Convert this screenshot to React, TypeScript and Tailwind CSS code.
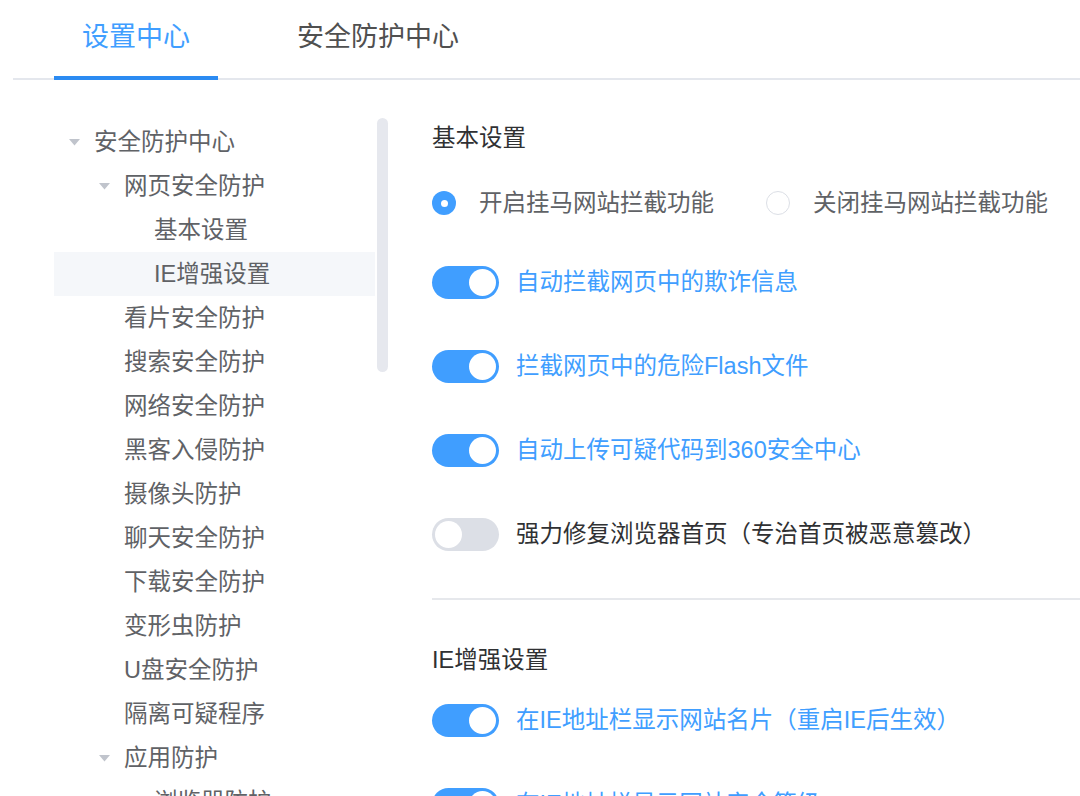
import { useState } from "react";

type TreeNode = {
  label: string;
  level: number;
  expanded?: boolean;
  active?: boolean;
};

const TREE: TreeNode[] = [
  { label: "安全防护中心", level: 0, expanded: true },
  { label: "网页安全防护", level: 1, expanded: true },
  { label: "基本设置", level: 2 },
  { label: "IE增强设置", level: 2, active: true },
  { label: "看片安全防护", level: 1 },
  { label: "搜索安全防护", level: 1 },
  { label: "网络安全防护", level: 1 },
  { label: "黑客入侵防护", level: 1 },
  { label: "摄像头防护", level: 1 },
  { label: "聊天安全防护", level: 1 },
  { label: "下载安全防护", level: 1 },
  { label: "变形虫防护", level: 1 },
  { label: "U盘安全防护", level: 1 },
  { label: "隔离可疑程序", level: 1 },
  { label: "应用防护", level: 1, expanded: true },
  { label: "浏览器防护", level: 2 },
];

const PAD: Record<number, string> = { 0: "pl-0", 1: "pl-[30px]", 2: "pl-[60px]" };

function Caret() {
  return (
    <svg width="11" height="7" viewBox="0 0 11 7">
      <path d="M0 0 H11 L5.5 6.5 Z" fill="#c0c4cc" />
    </svg>
  );
}

function Switch({ on, onToggle }: { on: boolean; onToggle: () => void }) {
  return (
    <button
      onClick={onToggle}
      className={`flex h-[33px] w-[67px] shrink-0 items-center rounded-full px-[3px] ${
        on ? "justify-end bg-[#409eff]" : "justify-start bg-[#dcdfe6]"
      }`}
    >
      <span className="h-[27px] w-[27px] rounded-full bg-white" />
    </button>
  );
}

function SwitchRow({ label, initial }: { label: string; initial: boolean }) {
  const [on, setOn] = useState(initial);
  return (
    <div className="flex h-[84px] items-center">
      <Switch on={on} onToggle={() => setOn(!on)} />
      <span className={`ml-[17px] whitespace-nowrap ${on ? "text-[#409eff]" : "text-[#303133]"}`}>{label}</span>
    </div>
  );
}

function Radio({ checked, label, onPick }: { checked: boolean; label: string; onPick: () => void }) {
  return (
    <label className="flex cursor-pointer items-center" onClick={onPick}>
      <span
        className={`flex h-[24px] w-[24px] items-center justify-center rounded-full ${
          checked ? "bg-[#409eff]" : "border-[1.5px] border-[#dcdfe6] bg-white"
        }`}
      >
        {checked && <span className="h-[7px] w-[7px] rounded-full bg-white" />}
      </span>
      <span className="ml-[23px] whitespace-nowrap text-[#606266]">{label}</span>
    </label>
  );
}

export default function App() {
  const [tab, setTab] = useState(0);
  const [blockOn, setBlockOn] = useState(true);

  return (
    <div className="h-[796px] w-[1080px] overflow-hidden bg-white font-['Liberation_Sans','Noto_Sans_CJK_SC',sans-serif] text-[23.5px] leading-[32px]">
      {/* Tabs */}
      <div className="ml-[13px] flex h-[80px] border-b-2 border-[#e4e7ed] pl-[41px]">
        {["设置中心", "安全防护中心"].map((t, i) => (
          <div
            key={t}
            onClick={() => setTab(i)}
            className={`relative cursor-pointer px-[28px] pt-[19px] text-[27px] leading-[36px] ${
              i === 1 ? "ml-[51px]" : ""
            } ${tab === i ? "text-[#409eff]" : "text-[#505050]"}`}
          >
            {t}
            {tab === i && <span className="absolute bottom-[-2px] left-0 right-0 h-[4px] bg-[#2b8bf2]" />}
          </div>
        ))}
      </div>

      <div className="flex">
        {/* Sidebar tree */}
        <div className="ml-[54px] flex items-start pt-[40px]">
          <div className="w-[321px]">
            {TREE.map((n) => (
              <div
                key={n.label}
                className={`flex h-[44px] items-center text-[#606266] ${PAD[n.level]} ${n.active ? "bg-[#f5f7fa]" : ""}`}
              >
                <span className="flex w-[40px] shrink-0 justify-center pl-[1px]">{n.expanded && <Caret />}</span>
                <span className="whitespace-nowrap">{n.label}</span>
              </div>
            ))}
          </div>
          <div className="ml-[2px] mt-[-2px] h-[254px] w-[11px] rounded-full bg-[#e6e8ee]" />
        </div>

        {/* Content */}
        <div className="ml-[44px] flex-1 pt-[42px]">
          <div className="text-[#303133]">基本设置</div>

          <div className="mt-[33px] flex h-[32px] items-center">
            <Radio checked={blockOn} label="开启挂马网站拦截功能" onPick={() => setBlockOn(true)} />
            <div className="ml-[52px]">
              <Radio checked={!blockOn} label="关闭挂马网站拦截功能" onPick={() => setBlockOn(false)} />
            </div>
          </div>

          <div className="mt-[21px]">
            <SwitchRow label="自动拦截网页中的欺诈信息" initial />
            <SwitchRow label="拦截网页中的危险Flash文件" initial />
            <SwitchRow label="自动上传可疑代码到360安全中心" initial />
            <SwitchRow label="强力修复浏览器首页（专治首页被恶意篡改）" initial={false} />
          </div>

          <div className="mt-[22px] h-[2px] bg-[#e6e8ec]" />

          <div className="mt-[44px] text-[#303133]">IE增强设置</div>
          <div className="mt-[2px]">
            <SwitchRow label="在IE地址栏显示网站名片（重启IE后生效）" initial />
            <SwitchRow label="在IE地址栏显示网站安全等级" initial />
          </div>
        </div>
      </div>
    </div>
  );
}
